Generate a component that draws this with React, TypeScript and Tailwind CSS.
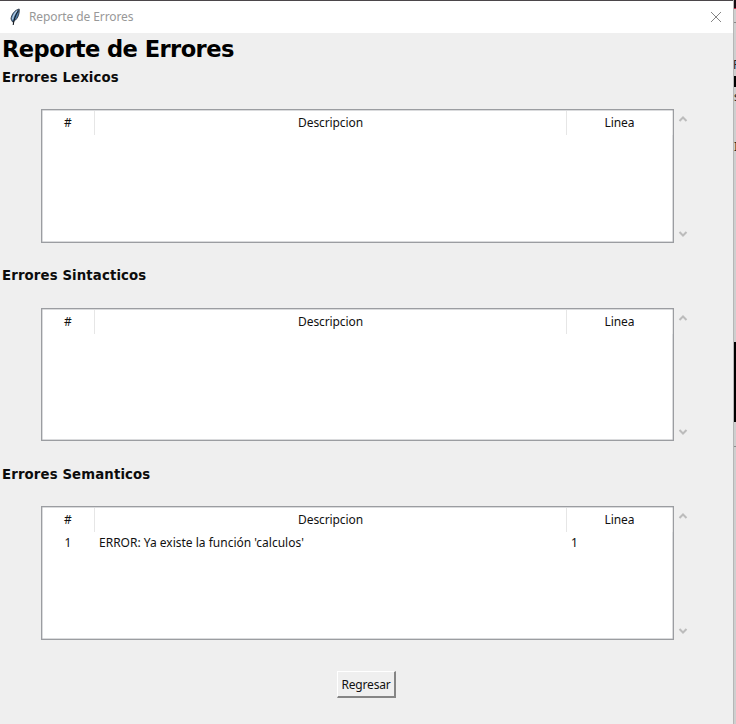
import React from "react";

type Row = { id: number; text: string; line: number };

const cell = "whitespace-nowrap text-[12px] leading-[18px] text-[#111]";

function Chevron({ down = false }: { down?: boolean }) {
  return (
    <svg width="10" height="8" viewBox="0 0 10 8" fill="none" stroke="#bcbcbc" strokeWidth="2">
      <path d={down ? "M1.5 2 L5 5.5 L8.5 2" : "M1.5 6 L5 2.5 L8.5 6"} />
    </svg>
  );
}

function ErrorTable({ title, rows = [] }: { title: string; rows?: Row[] }) {
  return (
    <section className="h-[198.4px]">
      <h2 className="h-[40.4px] pl-[2px] font-['DejaVu_Sans',sans-serif] text-[13.3px] leading-[18px] font-bold tracking-[0.12px] whitespace-nowrap text-[#0c0c0c]">
        {title}
      </h2>
      <div className="ml-[41px] flex">
        <div className="h-[133.4px] w-[633px] border border-[#9b9da1] bg-white shadow-[inset_0_0_0_0.5px_#b5b7bb]">
          <div className="flex h-[25px] pt-[1px]">
            <div className={`${cell} w-[53px] border-r border-[#e6e6e6] pt-[3px] text-center`}>#</div>
            <div className={`${cell} w-[472px] border-r border-[#e6e6e6] pt-[3px] text-center tracking-[-0.1px]`}>Descripcion</div>
            <div className={`${cell} w-[106px] border-r border-[#e6e6e6] pt-[3px] text-center tracking-[-0.1px]`}>Linea</div>
          </div>
          {rows.map((r) => (
            <div key={r.id} className="flex h-5 pt-[2px]">
              <div className={`${cell} w-[52px] text-center`}>{r.id}</div>
              <div className={`${cell} w-[472px] pl-[5px]`}>{r.text}</div>
              <div className={`${cell} pl-[5px]`}>{r.line}</div>
            </div>
          ))}
        </div>
        <div className="ml-[4px] flex h-[133.4px] flex-col justify-between pt-[6px] pb-[5px]">
          <Chevron />
          <Chevron down />
        </div>
      </div>
    </section>
  );
}

function Feather() {
  return (
    <svg width="12" height="18" viewBox="0 0 12 18">
      <path d="M10.2 1 C6 2 2.5 6 2 11 L3.6 14 C8 12 10.7 7 10.2 1Z" fill="#4a7aa8" stroke="#2b3644" strokeWidth="0.9" />
      <path d="M8.3 2.8 C5.6 5 4.2 8 3.4 11.5" fill="none" stroke="#b4cce2" strokeWidth="1.3" />
      <path d="M9.5 2.5 C7 6 5 10 4.2 17" fill="none" stroke="#161a20" strokeWidth="1.1" />
    </svg>
  );
}

function BackgroundEdge() {
  return (
    <div className="relative h-[724px] w-[3px] overflow-hidden border-l border-[#b6b6b6] bg-[#cfcfcf] font-['Noto_Sans',sans-serif] text-[12px] leading-[14px] text-[#222]">
      <div className="absolute top-0 left-0 h-[8px] w-[2px] bg-[#160c12]" />
      <div className="absolute top-[8px] left-0 h-[1px] w-[2px] bg-[#c32849]" />
      <div className="absolute top-[22px] left-0 h-[1px] w-[2px] bg-[#888]" />
      <span className="absolute top-[58px] left-[-1px]">F</span>
      <div className="absolute top-[76px] left-0 h-[11px] w-[2px] bg-black" />
      <span className="absolute top-[90px] left-0">s</span>
      <span className="absolute top-[140px] left-0">I</span>
      <div className="absolute top-[342px] left-0 h-[80px] w-[2px] bg-black" />
      <div className="absolute top-[446px] left-0 h-[1px] w-[2px] bg-[#8c8c8c]" />
    </div>
  );
}

export default function App() {
  return (
    <div className="flex h-[724px] w-[736px] overflow-hidden bg-[#efefef] font-['Noto_Sans',sans-serif]">
      <main className="h-[724px] w-[733px]">
        <header className="flex h-[33px] items-center border-t border-[#4b464a] bg-white pl-[9px]">
          <Feather />
          <span className="ml-[8px] text-[12px] tracking-[-0.1px] whitespace-nowrap text-[#989898]">Reporte de Errores</span>
          <svg className="mr-[11px] ml-auto" width="12" height="12" viewBox="0 0 12 12" stroke="#858585" strokeWidth="1">
            <path d="M1 1 L11 11 M11 1 L1 11" />
          </svg>
        </header>
        <h1 className="h-[36px] pl-[2px] font-['DejaVu_Sans',sans-serif] text-[22.6px] leading-[33px] font-bold tracking-[-0.57px] whitespace-nowrap text-black">
          Reporte de Errores
        </h1>
        <ErrorTable title="Errores Lexicos" />
        <ErrorTable title="Errores Sintacticos" />
        <ErrorTable
          title="Errores Semanticos"
          rows={[{ id: 1, text: "ERROR: Ya existe la función 'calculos'", line: 1 }]}
        />
        <button className="mt-[6.8px] ml-[337px] block h-[27px] w-[59px] border-t border-r-2 border-b-2 border-l border-t-white border-r-[#858585] border-b-[#858585] border-l-white bg-[#efefef] pt-[1px] text-[12px] leading-[23px] tracking-[-0.2px] whitespace-nowrap text-[#111]">
          Regresar
        </button>
      </main>
      <BackgroundEdge />
    </div>
  );
}
